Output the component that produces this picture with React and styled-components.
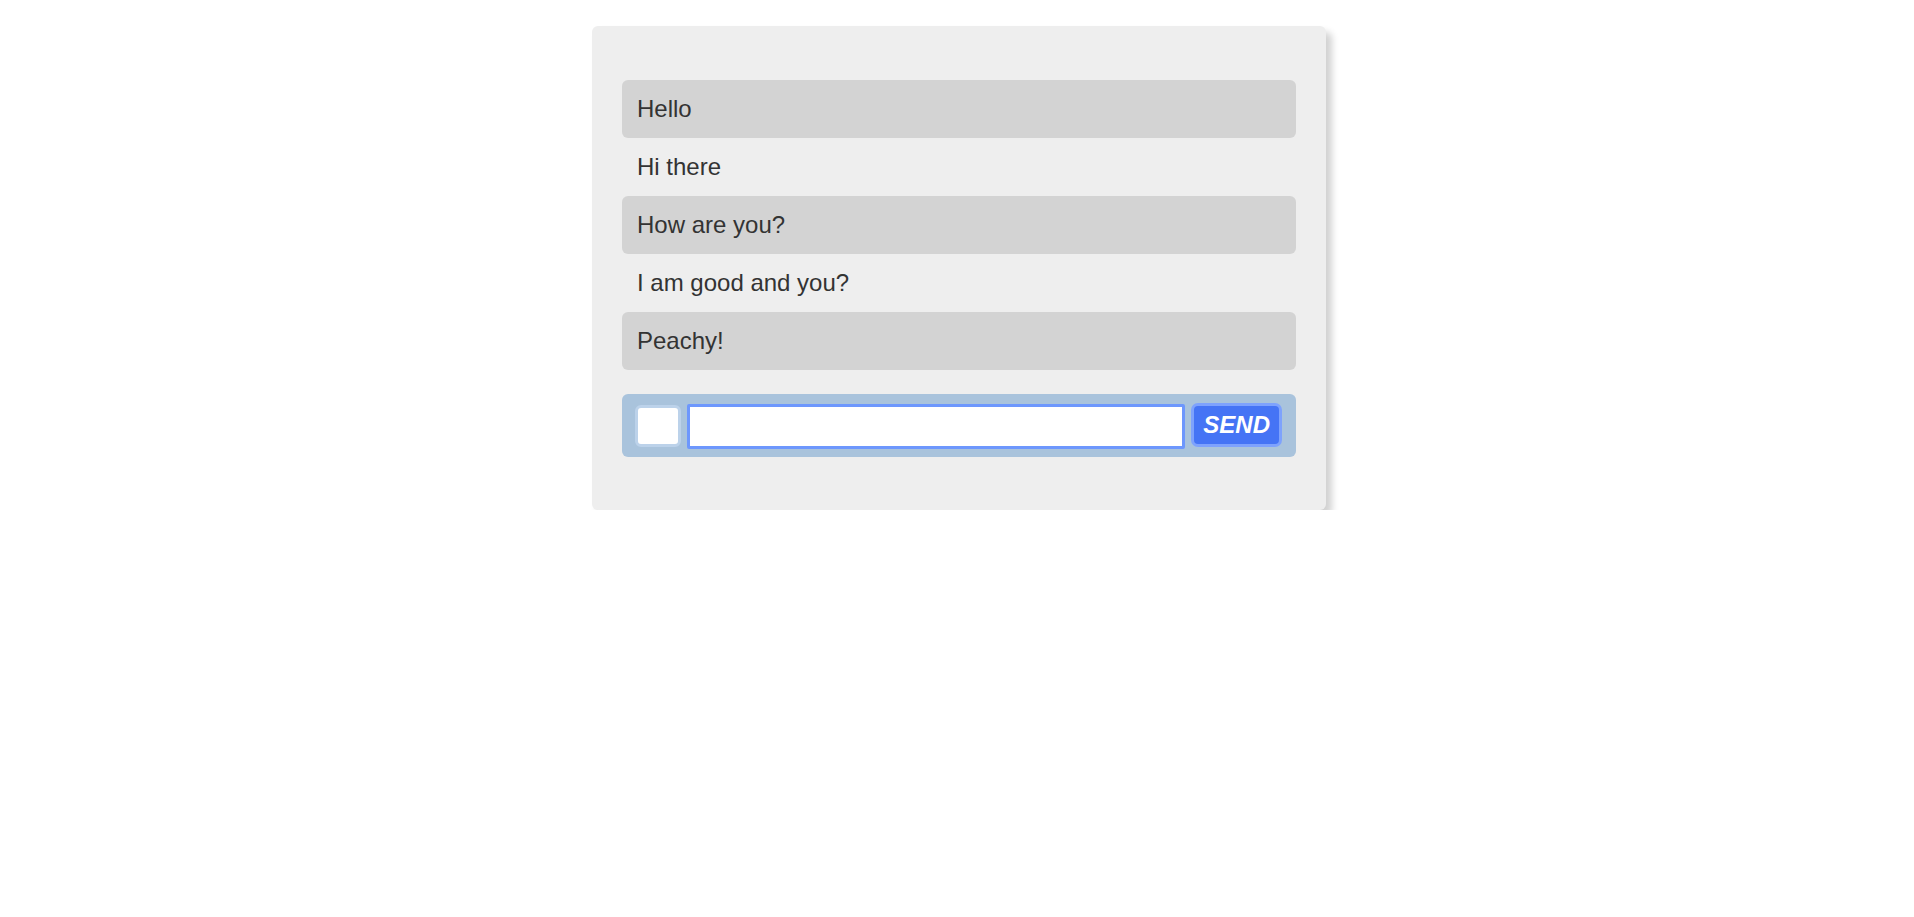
import React from "react";
import styled, { createGlobalStyle } from "styled-components";

const Global = createGlobalStyle`
  html, body { margin: 0; padding: 0; background: #fff; }
  body { font-family: "Liberation Sans", Arial, sans-serif; }
`;

const Page = styled.div`
  display: flex;
  justify-content: center;
  padding: 26px 0 0 4px;
`;

const Card = styled.div`
  width: 734px;
  box-sizing: border-box;
  background: #eeeeee;
  border-radius: 6px;
  padding: 54px 30px 53px;
  box-shadow: 6px 6px 7px rgba(0, 0, 0, 0.18);
`;

const List = styled.div`
  display: flex;
  flex-direction: column;
  margin-bottom: 24px;
`;

const Message = styled.div`
  padding: 15px;
  border-radius: 6px;
  font-size: 24px;
  line-height: 28px;
  color: #333;
  background: ${(p) => (p.$shaded ? "#d3d3d3" : "transparent")};
`;

const Bar = styled.form`
  display: flex;
  align-items: flex-start;
  gap: 6px;
  background: #a9c3dc;
  border-radius: 6px;
  padding: 9px 14px 8px 13px;
  margin: 0;
`;

const Square = styled.button`
  width: 46px;
  height: 42px;
  box-sizing: border-box;
  border: 3px solid #bcd2ea;
  border-radius: 6px;
  background: #fff;
  padding: 0;
  margin-top: 2px;
`;

const Field = styled.input`
  flex: 1;
  min-width: 0;
  height: 45px;
  box-sizing: border-box;
  border: 3px solid #6d97fd;
  border-radius: 2px;
  background: #fff;
  outline: none;
  font-family: "Liberation Sans", Arial, sans-serif;
  font-size: 24px;
  padding: 0 2px;
  margin-top: 1px;
  caret-color: #000;
`;

const Send = styled.button`
  height: 44px;
  box-sizing: border-box;
  padding: 0 9px;
  border: 3px solid #7ea2fd;
  border-radius: 7px;
  background: #4574f5;
  color: #fff;
  font-family: "Liberation Sans", Arial, sans-serif;
  font-weight: bold;
  font-style: italic;
  font-size: 24px;
  line-height: 1;
  cursor: pointer;
`;

const messages = ["Hello", "Hi there", "How are you?", "I am good and you?", "Peachy!"];

export default function App() {
  return (
    <>
      <Global />
      <Page>
        <Card>
          <List>
            {messages.map((m, i) => (
              <Message key={i} $shaded={i % 2 === 0}>
                {m}
              </Message>
            ))}
          </List>
          <Bar onSubmit={(e) => e.preventDefault()}>
            <Square type="button" />
            <Field autoFocus />
            <Send type="submit">SEND</Send>
          </Bar>
        </Card>
      </Page>
    </>
  );
}
